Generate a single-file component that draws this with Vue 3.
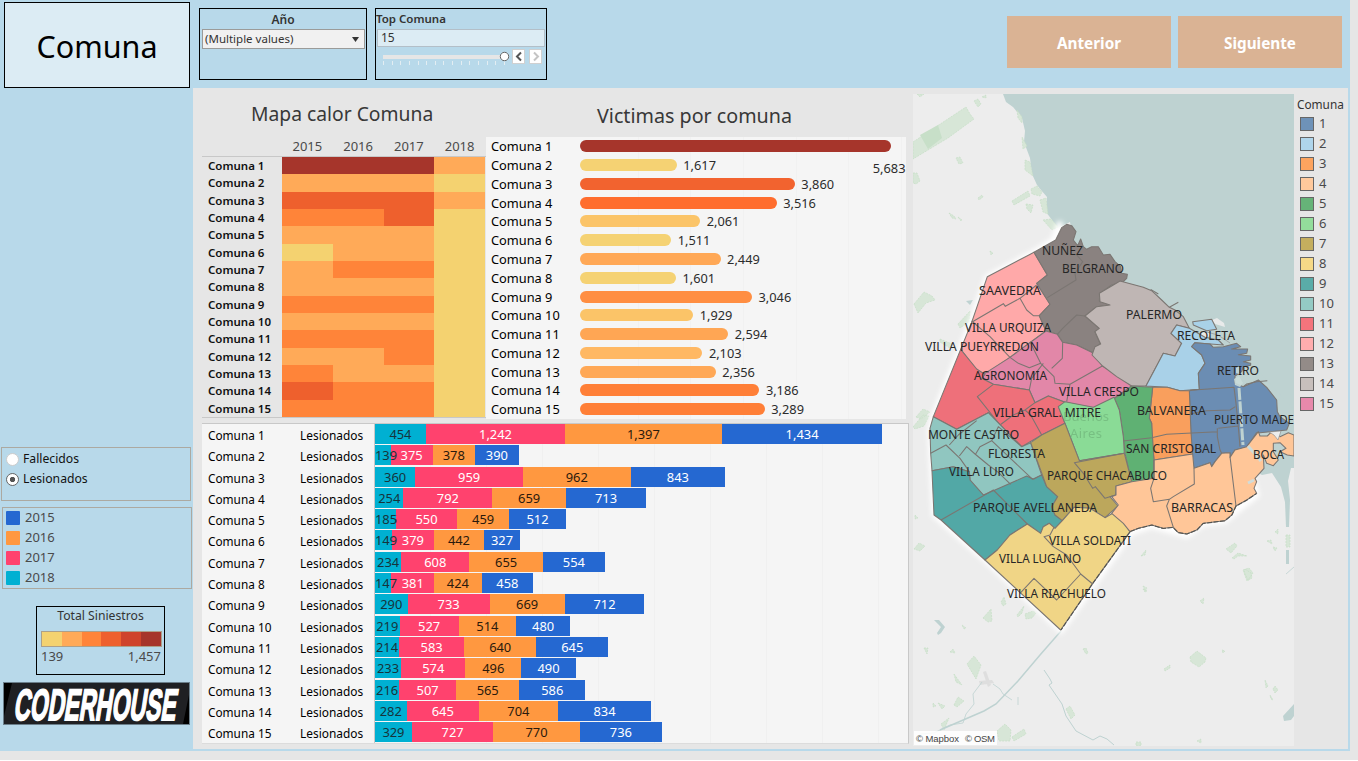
<script setup>
const heat = ['AAAC', 'CCCL', 'BBBC', 'OOBL', 'CCCL', 'LCCL', 'COOL', 'CCCL', 'OOOL', 'CCCL', 'OOOL', 'CCOL', 'OCCL', 'BOOL', 'OOOL']
const heatColors = { A: '#a6352b', B: '#ee602d', O: '#ff8439', C: '#ffaa58', L: '#f4d270' }
const scaleColors = ['#f4d270', '#ffaa58', '#ff8439', '#ee602d', '#cf432b', '#a6352b']

const victims = [
  [5683, '#a6352b'], [1617, '#f5d273'], [3860, '#f2632f'], [3516, '#ff6d2e'], [2061, '#fbc468'],
  [1511, '#f5d273'], [2449, '#ffa856'], [1601, '#f5d273'], [3046, '#ff8e42'], [1929, '#fbc468'],
  [2594, '#ffa654'], [2103, '#ffb863'], [2356, '#ffa856'], [3186, '#ff7f37'], [3289, '#ff7f37'],
]
const fmt = (n) => n.toLocaleString('en-US')
const barWidth = (v) => 11.7 + v * 0.05263 + 'px'

const injured = [
  [454, 1242, 1397, 1434], [139, 375, 378, 390], [360, 959, 962, 843], [254, 792, 659, 713],
  [185, 550, 459, 512], [149, 379, 442, 327], [234, 608, 655, 554], [147, 381, 424, 458],
  [290, 733, 669, 712], [219, 527, 514, 480], [214, 583, 640, 645], [233, 574, 496, 490],
  [216, 507, 565, 586], [282, 645, 704, 834], [329, 727, 770, 736],
]
const years = [['2015', '#2568d1'], ['2016', '#ff9840'], ['2017', '#ff426e'], ['2018', '#00b0d2']]

const legend = ['#6e92b8', '#afd5eb', '#fda45f', '#ffc99c', '#66b378', '#93dd9b', '#c4ae5e', '#f6d987', '#5aaca8', '#94cac4', '#f4747c', '#ffadae', '#938b88', '#c7bfbc', '#e789ab']

// Each tile carries its own origin; shapes inside use thirds of a pixel.
const tiles = [
  {
    t: 'translate(910 215) scale(.33333)',
    areas: [
      ['#ffa9a9', 'M232,185L372,112 412,180 380,205 420,268 388,302 408,348 300,427 225,478 200,465 152,403 185,322Z'],
      ['#8a8280', 'M372,112L437,75 455,38 470,28 485,32 498,50 490,75 503,92 512,72 520,95 530,103 545,95 565,95 580,120 600,118 615,140 632,155 635,175 652,178 650,190 640,200 605,210 570,235 568,258 600,270 560,275 525,303 568,340 555,350 570,385 548,413 500,390 458,382 442,358 408,348 388,302 420,268 380,205 412,180Z'],
      ['#e287a8', 'M220,478L300,427 408,348 442,358 458,382 500,390 548,413 577,453 620,478 665,513 612,550 550,578 465,562 415,543 375,563 358,525 250,508 215,490Z'],
      ['#ee707a', 'M152,403L200,462 225,478 215,490 250,508 358,525 375,563 415,543 465,562 445,575 465,625 395,660 335,695 235,593 140,643 70,605Z'],
    ],
    lines: 'M185,322L280,266 286,274 330,250 380,210M330,250L350,285 370,302 388,302M185,318L240,365 300,427M412,248L498,195 495,175 518,140 500,120M442,358L458,340 500,300 525,303M300,427L325,445 358,458 392,445 360,380M392,445L432,485 435,505 480,508 577,453M425,460L457,430 458,382M400,445L365,490 358,525M480,508L470,560M250,508L202,545 270,630 310,600 345,585 375,563M345,585L362,600 395,660',
  },
  {
    t: 'translate(1080 250) scale(.33333)',
    areas: [
      ['#bfb6b4', 'M95,108L120,93 190,112 215,122 245,150 268,172 285,180 310,200 328,235 290,225 273,250 305,280 285,318 250,310 198,408 155,408 110,380 68,348 36,315 45,290 62,282 45,245 58,235 15,198 50,170 90,165 60,155 58,130Z'],
      ['#a9d1e8', 'M290,225L328,235 375,262 415,270 430,285 345,278 335,290 365,315 375,340 355,370 358,418 300,422 262,412 198,408 250,310 285,318 305,280 273,250Z'],
      ['#a9d1e8', 'M338,215L395,208 410,238 380,242 340,225Z'],
      ['#6b8db3', 'M345,278L390,282 400,292 430,290 470,280 482,290 455,297 503,297 500,310 475,314 512,318 512,330 490,335 512,340 512,346 490,350 485,365 465,378 465,400 490,410 535,390 560,412 590,450 592,485 600,500 628,520 620,540 570,545 540,548 530,548 500,592 465,600 450,622 450,608 425,610 405,635 395,650 390,638 342,655 335,615 328,422 358,418 355,370 375,340 365,315 335,290Z'],
      ['#f99f5d', 'M218,412L262,412 300,422 328,422 333,548 338,612 222,630 215,560 215,520 208,505Z'],
      ['#5fb173', 'M155,408L218,412 208,505 215,520 222,630 222,685 155,698 135,610 130,560 118,480 103,445 120,435Z'],
    ],
    lines: 'M330,421L462,412 468,460 475,530 480,590M330,492L380,482 450,480 466,470M215,563L260,553 412,545M130,573L215,563M415,535L475,528M412,535L412,560 420,600 425,610M268,172L295,157M490,410L500,402 530,395 562,392M212,118L235,132',
  },
  {
    t: 'translate(910 400) scale(.33333)',
    areas: [
      ['#8adb96', 'M445,20L465,5 550,22 612,-8 628,30 640,110 643,160 508,182 465,70Z'],
      ['#90c6c0', 'M70,50L140,88 235,38 335,140 362,128 395,225 368,238 350,230 255,280 220,285 180,240 178,215 130,200 66,212 62,160 60,85Z'],
      ['#52a8a6', 'M66,212L130,200 178,215 180,240 220,285 255,270 350,228 370,238 395,225 410,260 443,290 425,320 435,345 457,362 435,385 418,370 400,380 392,400 352,372 300,405 262,450 225,480 93,360 72,345Z'],
      ['#bca75c', 'M362,128L395,105 465,70 508,182 643,160 665,245 618,258 617,285 600,290 624,318 585,353 540,325 492,322 457,362 435,345 425,320 443,290 410,260Z'],
      ['#f0d586', 'M457,362L492,322 540,325 585,353 608,340 640,365 660,395 550,548 452,690 225,480 262,450 300,405 352,372 392,400 400,380 418,370 435,385Z'],
    ],
    lines: 'M62,160L108,135 150,175 178,215M148,168L170,140 195,162 235,195 265,217 302,253M118,135L145,105 200,62M197,162L210,140 245,122 368,238M245,122L265,80 335,140M93,360L250,270 352,372M643,160L493,188 520,220 548,265 556,260 585,295 617,285M432,382L420,405 402,410 430,440 470,465 512,522 548,552M330,580L372,535 440,600 512,522',
  },
  {
    t: 'translate(1080 400) scale(.33333)',
    areas: [
      ['#ffc698', 'M108,258L155,245 222,235 222,180 338,162 342,205 390,188 395,200 405,185 425,160 450,158 450,172 465,150 500,140 535,95 540,108 562,108 575,95 600,110 625,98 642,105 642,168 622,165 600,155 618,145 600,128 580,130 580,155 595,180 580,197 560,190 550,165 552,205 525,235 530,245 522,265 530,280 500,300 468,318 455,345 435,362 370,370 350,390 320,402 295,398 280,382 250,385 215,375 175,385 150,395 130,370 95,340 115,315 95,290 108,285Z'],
    ],
    lines: 'M222,180L222,235 212,265 220,305 268,298 280,290 343,252 342,205M268,298L260,318 280,382M450,170L468,318',
  },
]

const places = [
  ['NUÑEZ', 1042, 41, 255], ['BELGRANO', 1062, 62, 273], ['SAAVEDRA', 979, 62, 295], ['VILLA URQUIZA', 965, 86, 332],
  ['VILLA PUEYRREDON', 925, 114, 351], ['PALERMO', 1126, 56, 319], ['RECOLETA', 1177, 58, 340], ['RETIRO', 1217, 42, 375],
  ['AGRONOMIA', 974, 73, 380], ['VILLA CRESPO', 1059, 80, 396], ['VILLA GRAL. MITRE', 993, 108, 417], ['BALVANERA', 1137, 69, 415],
  ['PUERTO MADE', 1214, 80, 424], ['MONTE CASTRO', 928, 91, 439], ['FLORESTA', 988, 57, 458], ['SAN CRISTOBAL', 1126, 90, 453],
  ['BOCA', 1253, 31, 459], ['VILLA LURO', 949, 65, 476], ['PARQUE CHACABUCO', 1047, 120, 480], ['PARQUE AVELLANEDA', 973, 124, 512],
  ['BARRACAS', 1171, 62, 512], ['VILLA SOLDATI', 1049, 82, 545], ['VILLA LUGANO', 999, 82, 563], ['VILLA RIACHUELO', 1007, 99, 598],
]
</script>

<template>
  <div class="page">
    <div class="board">
      <aside class="side">
        <h1 class="title">Comuna</h1>
        <div class="radios">
          <label><i class="radio"></i>Fallecidos</label>
          <label><i class="radio on"></i>Lesionados</label>
        </div>
        <div class="years">
          <div v-for="y in years" :key="y[0]"><i :style="{ background: y[1] }"></i><span>{{ y[0] }}</span></div>
        </div>
        <div class="scale">
          <div class="scale-title">Total Siniestros</div>
          <div class="ramp"><i v-for="c in scaleColors" :key="c" :style="{ background: c }"></i></div>
          <div class="ends"><span>139</span><span>1,457</span></div>
        </div>
        <svg class="logo" viewBox="0 0 187 43">
          <rect width="187" height="43" fill="#1f2023" />
          <path d="M1,1H9L1,34ZM187,8V42H180Z" fill="#000" />
          <rect x=".5" y=".5" width="186" height="42" fill="none" stroke="#6b7f8b" />
          <text transform="translate(10 37.500) skewX(-9)" x="0" y="0" textLength="162" lengthAdjust="spacingAndGlyphs">CODERHOUSE</text>
        </svg>
      </aside>

      <div class="content">
        <header class="top">
          <section class="filter">
            <div class="filter-name center">Año</div>
            <div class="select"><span>(Multiple values)</span><svg width="7" height="5"><path d="M0,0H7L3.5,5Z" fill="#333" /></svg></div>
          </section>
          <section class="filter top-n">
            <div class="filter-name">Top Comuna</div>
            <div class="field">15</div>
            <svg class="slider" viewBox="0 0 170 20" width="170" height="20">
              <rect x="7" y="7" width="121" height="4" fill="#e6e6e6" />
              <path v-for="i in 15" :key="i" :d="`M${Math.round((i - 1) * 8.64) + 7.5},13v4`" stroke="#e3edf2" />
              <circle cx="128.500" cy="8.500" r="4.200" fill="#fff" stroke="#666" />
              <rect x="136.500" y="1.500" width="12" height="14" fill="#fff" stroke="#d0d0d0" />
              <rect x="153.500" y="1.500" width="12" height="14" fill="#fff" stroke="#d0d0d0" />
              <path d="M145,4.500L141,8.500 145,12.500" fill="none" stroke="#555" stroke-width="2" />
              <path d="M158,4.500L162,8.500 158,12.500" fill="none" stroke="#c4c4c4" stroke-width="2" />
            </svg>
          </section>
          <nav><button>Anterior</button><button>Siguiente</button></nav>
        </header>

        <main class="panel">
          <div class="charts">
            <div class="upper">
              <section class="heat">
                <h2>Mapa calor Comuna</h2>
                <div class="heat-head"><b></b><span v-for="y in years" :key="y[0]">{{ y[0] }}</span></div>
                <div class="heat-body">
                  <div v-for="(r, i) in heat" :key="i" class="heat-row">
                    <b>Comuna {{ i + 1 }}</b>
                    <i v-for="(c, j) in r" :key="j" :style="{ background: heatColors[c] }"></i>
                  </div>
                </div>
              </section>
              <section class="victims">
                <h2>Victimas por comuna</h2>
                <div class="victims-body">
                  <div v-for="(v, i) in victims" :key="i" class="v-row">
                    <span class="v-name">Comuna {{ i + 1 }}</span>
                    <i :style="{ width: barWidth(v[0]), background: v[1] }"></i>
                    <span :class="['v-num', { below: i === 0 }]">{{ fmt(v[0]) }}</span>
                  </div>
                </div>
              </section>
            </div>
            <section class="stack">
              <div v-for="(r, i) in injured" :key="i" class="s-row">
                <span class="s-name">Comuna {{ i + 1 }}</span>
                <span class="s-kind">Lesionados</span>
                <div class="s-bars">
                  <div v-for="(n, j) in r" :key="j" :class="['seg', 'seg' + j]" :style="{ width: n * 0.1121 + 'px' }"><span>{{ fmt(n) }}</span></div>
                </div>
              </div>
            </section>
          </div>

          <svg class="map" viewBox="913 94 381 652" width="381" height="652">
            <defs>
              <filter id="glow" x="-10%" y="-10%" width="120%" height="120%"><feGaussianBlur stdDeviation="2.500" /></filter>
            </defs>
            <rect x="913" y="94" width="381" height="652" fill="#ededed" />
            <path fill="#bed2d1" d="M1003,94L1006,102 1013,107 1022,118 1025,131 1024,142 1030,158 1032,174 1037,185 1041,190 1047,197 1046,212 1052,220 1058,228 1070,222 1090,330 1200,440 1262,475 1272,473 1281,487 1285,502 1286,527 1289,527 1290,500 1288,481 1291,468 1294,468V94Z" />
            <path fill="#d7e6d7" stroke="#c5dec6" stroke-width=".7" stroke-dasharray="2 1" d="M913,142L966,107 970,114 974,119 948,138 913,159ZM974,101l4,-2 3,5 -3,3ZM982,97l4,-2v3ZM917,94h7l-4,3ZM956,158l4,-1 3,6 -4,1ZM913,173l4,0 3,8 -4,3 -3,-1ZM978,198l4,-3 1,2 -4,3ZM949,213l5,3 2,3 -4,-1ZM958,217l4,3 -1,1ZM1012,201L1028,191 1030,196 1014,205ZM1026,204l7,1 -2,8 -4,-4ZM1025,160l5,2 3,14 -8,-6ZM1031,189l6,-3 5,6 -2,4 -8,-2ZM1040,200l6,-2 2,16 -5,-2ZM1043,220l8,-1 7,8 -6,3ZM1017,110l5,7v6l-4,-5ZM1022,137l5,9 -4,3ZM990,251l3,2 -2,2ZM914,304L924,292 932,296 935,300 926,303 918,313ZM958,324l12,-13 -1,11 -9,6ZM940,339l12,5 -2,4 -10,-6ZM916,417l7,-8 7,3 -9,7ZM913,427l10,-12 6,1 -5,10 -9,3ZM915,515l3,3 -3,1ZM914,549l5,-6 6,3 -5,5ZM1001,602l3,-5 2,7 -3,2ZM983,618l8,-9 1,12 -4,1ZM1017,615l7,-9 -2,7 -4,4ZM1025,614l8,-3 3,2 -4,5 -6,1ZM962,625l4,3 -2,1ZM967,664L974,656 981,665 976,679ZM924,648h4l-1,6ZM950,652l3,-3 2,4ZM954,674l8,11 -6,-3ZM933,703l3,3 -3,1ZM938,703l7,3 -3,3ZM954,705l4,-8 6,4 -7,6ZM941,724l8,-6 -5,12ZM997,731l8,-7 6,6 -1,11h-11ZM1012,737l12,-8 2,5 -12,7ZM1066,709l4,-3 5,9 -4,4ZM1083,649l3,-1 2,5 -2,1ZM1164,669l6,-4v3l-5,3ZM1190,657l7,-6 9,7 -1,4 -6,5 -8,-5ZM1222,650l3,1 -2,2ZM1265,680l3,6 -2,2ZM1273,689l2,-3 3,4 -3,3ZM1270,695l3,5 -2,-1ZM1136,742h5v4h-5ZM1197,741l4,-2v4ZM1143,586l4,2 -2,3ZM1200,601l4,-3 -1,6ZM1245,569l6,4 1,5 -5,3 -3,-8ZM1226,549l9,-6 2,3 -6,7ZM1232,558l6,-5 9,3 -9,0 -4,3ZM1243,570l6,-2 4,5 -5,7ZM1267,541l4,-1 1,4ZM1275,532l3,-3v5ZM1273,547l4,1 -2,3ZM1286,535h4v12h-4ZM1141,556l5,-6 -1,5ZM1143,589l4,2 -2,1Z" />
            <path fill="#c7dfc8" d="M920,135L938,125 942,138 928,149Z" />
            <path fill="#d4d4d4" d="M983,672l3,-1 5,14 -3,2ZM979,681l13,-1 2,3 -14,2Z" opacity=".6" />
            <path fill="#bed2d1" d="M966,301l7,-1 -3,5ZM934,620h5l6,7 -4,6 -3,2 -1,-2 4,-6ZM1294,704L1283,716 1284,721 1291,720 1294,716ZM1286,550h3v14h-3Z" />
            <g fill="none" stroke="#bed2d1">
              <path d="M1061,631L1040,655 1018,681 996,704 984,711 940,730" stroke-width="1.500" />
              <path d="M1044,670L1050,679 1052,683 1049,685 1062,704 1066,716 1076,731 1093,740L1100,736 1107,739 1114,745" stroke-width="1" />
              <path d="M917,740L920,734 934,733 950,725 963,723 966,714 974,704 973,694 982,682M993,684l7,5 3,5 9,6M1018,697v8M1286,574l8,-7" stroke-width=".8" />
            </g>
            <g filter="url(#glow)">
              <path d="M1060,222L1053,240 1034,252 987,277 971,322 933,417 930,430 934,515 985,560 1061,631 1131,533 1152,526 1187,536 1203,524 1225,521 1257,495 1250,470 1200,440 1100,400 1070,300Z" fill="#fff" stroke="#fff" stroke-width="5" />
            </g>
            <path d="M1075,228L1130,278 1187,312 1235,340 1262,375 1294,410V445L1262,445 1200,440 1150,390 1075,290Z" fill="#bed2d1" />
            <path fill="#ececec" d="M1212,320l5,-2 7,5 1,4 -10,-3ZM1203,330l8,4 -5,5 -5,-4Z" opacity=".9" />
            <path d="M1203,331L1218,335 1230,343" fill="none" stroke="#999" stroke-width=".8" />
            <g v-for="(g, i) in tiles" :key="i" :transform="g.t" stroke="#7b7672" stroke-width="3.200" stroke-linejoin="round">
              <path v-for="(a, j) in g.areas" :key="j" :fill="a[0]" :d="a[1]" />
              <path :d="g.lines" fill="none" />
            </g>
            <path d="M1239,388L1243,445" stroke="#bed2d1" stroke-width="3" stroke-dasharray="12 1.500" />
            <path d="M1234,379l5,-3 4,7 -3,4 -5,-2ZM1236,368l3,-2v8l-3,-1Z" fill="#c9dcd9" opacity=".9" />
            <path d="M1248,483l6,-3M1248,446l13,15" stroke="#d0dcda" stroke-width="3" />
            <path d="M1269,432l12,-1 -3,9 -4,-5Z" fill="#ededed" stroke="#888" stroke-width=".6" />
            <path d="M1130,531.500L1138,528.500 1152,525 1163,528.500 1173,527.500 1178,532.500 1187,534 1197,530 1203,523.500 1225,520.700 1232,515 1236,506 1247,500 1256.500,493.500M1130,532L1093,583 1061,630" fill="none" stroke="#535350" stroke-width="1.100" stroke-dasharray="5 1.500" />
            <g class="city"><text x="1063" y="421" textLength="46">Buenos</text><text x="1070" y="438" textLength="32">Aires</text></g>
            <g class="places">
              <text v-for="p in places" :key="p[0]" :x="p[1]" :y="p[3]" :textLength="p[2]" lengthAdjust="spacingAndGlyphs">{{ p[0] }}</text>
            </g>
            <rect x="914" y="731" width="83" height="14" fill="#fff" opacity=".85" />
            <g class="credit"><text x="916" y="742" textLength="43">© Mapbox</text><text x="965" y="742" textLength="30">© OSM</text></g>
          </svg>

          <div class="legend">
            <div class="legend-title">Comuna</div>
            <div v-for="(c, i) in legend" :key="i" class="legend-row"><i :style="{ background: c }"></i><span>{{ i + 1 }}</span></div>
          </div>
        </main>
      </div>
    </div>
  </div>
</template>

<style>
body { background: #fff; }
</style>
<style scoped>
* { box-sizing: border-box; margin: 0; }
.page { width: 1358px; height: 760px; background: #e6e6e6; font: 13px/16px "Noto Sans", "Open Sans", sans-serif; color: #333; overflow: hidden; }
.board { width: 1350px; height: 751px; background: #b8d9ea; display: flex; }
i { display: block; flex: none; }
.side { width: 193px; height: 751px; padding: 2px 0 0 1px; display: flex; flex-direction: column; flex: none; }
.title { width: 186px; height: 86px; margin-left: 3px; border: 1px solid #000; background: #dcecf4; color: #000; font-size: 30.500px; font-weight: 400; display: flex; align-items: center; justify-content: center; padding-top: 2px; }
.radios { width: 190px; height: 54px; margin-top: 359px; border: 1px solid #aca9a1; padding: 1px 0 0 4px; font-size: 12.200px; color: #111; }
.radios label { display: flex; align-items: center; height: 20px; gap: 4px; }
.radio { width: 13px; height: 13px; border-radius: 50%; background: #fff; border: 1px solid #ccc; }
.radio.on { border-color: #666; background: radial-gradient(circle, #555 0 2.300px, #fff 3px); }
.years { width: 190px; height: 82px; margin: 6px 0 0 1px; border: 1px solid #aca9a1; padding-left: 3px; color: #4a4a4a; }
.years div { display: flex; align-items: center; gap: 5px; height: 20px; }
.years i { width: 14px; height: 14px; border-radius: 1px; }
.years span { padding-bottom: 2px; }
.scale { width: 129px; height: 69px; margin: 17px 0 0 35px; border: 1px solid #000; }
.scale-title { text-align: center; font-size: 12.200px; height: 24px; line-height: 17px; }
.ramp { display: flex; width: 121px; height: 16px; margin-left: 4px; border: 1px solid #aca08a; }
.ramp i { flex: 1; }
.ends { display: flex; justify-content: space-between; padding: 1px 3px 0 4px; color: #4a4a4a; }
.logo { width: 187px; height: 43px; margin: 7px 0 0 2px; }
.logo text { font: bold 44px "Liberation Sans", sans-serif; fill: #fff; stroke: #fff; stroke-width: 1.800px; }
.content { width: 1157px; display: flex; flex-direction: column; }
.top { height: 88px; display: flex; padding: 8px 0 0 6px; gap: 8px; }
.filter { width: 168px; height: 72px; border: 1px solid #000; padding: 1px 2px; }
.filter-name { font-weight: 600; font-size: 12px; height: 19px; line-height: 19px; }
.top-n .filter-name { font-size: 11.500px; line-height: 18px; }
.center { text-align: center; }
.select { height: 20px; width: 163px; border: 1px solid #9b9b99; background: #f1f1f1; display: flex; justify-content: space-between; align-items: center; padding: 0 5px 0 2px; font-size: 11.500px; }
.top-n { width: 172px; padding: 1px 0; }
.field { height: 18px; width: 168px; margin-left: 1px; border: 1px solid #b3bfc8; background: #dcecf4; font-size: 12px; line-height: 16px; padding-left: 3px; }
.slider { display: block; margin-top: 1px; }
nav { margin: 8px 8px 0 auto; display: flex; gap: 7px; }
button { width: 164px; height: 52px; border: 0; background: #dab394; color: #fff; font: bold 15.300px "Noto Sans", sans-serif; padding: 2px 0 0; }
.panel { height: 661px; width: 1155px; background: #e6e6e6; display: flex; }
.charts { width: 720px; padding-left: 9px; flex: none; }
.upper { display: flex; height: 335px; }
h2 { font-size: 19.700px; font-weight: 400; line-height: 26px; color: #383838; white-space: nowrap; }
.heat { width: 284px; }
.heat h2 { margin: 13px 0 0 49px; font-size: 19.300px; }
.heat-head { display: flex; height: 29px; align-items: flex-end; line-height: 19px; color: #4a4a4a; }
.heat-head b { width: 80px; }
.heat-head span { width: 50.750px; text-align: center; }
.heat-body { height: 262px; border-top: 1px solid #c8c8c8; border-bottom: 1px solid #c8c8c8; }
.heat-row { display: flex; height: 17.333px; }
.heat-row b { width: 80px; padding-left: 6px; font-size: 11.500px; font-weight: 600; color: #111; line-height: 18px; }
.heat-row i { width: 50.750px; }
.victims { width: 420px; }
.victims h2 { margin: 15px 0 8px 111px; }
.victims-body { height: 282px; background: repeating-linear-gradient(90deg, transparent 0 51.700px, #f1f1f1 51.700px 52.700px) 100px 0 / 320px 100% no-repeat, #f5f5f5; }
.v-row { height: 18.770px; display: flex; align-items: center; }
.v-name { width: 94px; padding-left: 5px; font-size: 12.800px; color: #000; }
.v-row i { height: 12px; border-radius: 6px; }
.v-num { margin-left: 6.500px; color: #2c2c2c; font-size: 12.800px; }
.v-num.below { margin-left: -18px; transform: translateY(22px); }
.stack { width: 707px; height: 321px; border-top: 1px solid #c8c8c8; border-right: 1px solid #c8c8c8; border-bottom: 1px solid #dcdcdc; background: #f5f5f5; }
.s-row { height: 21.300px; display: flex; color: #000; font-size: 12px; line-height: 22px; }
.s-name { width: 98px; padding-left: 6px; font-size: 11.800px; }
.s-kind { width: 75px; font-size: 11.900px; border-right: 1px solid #c8c8c8; }
.s-bars { flex: 1; display: flex; background: repeating-linear-gradient(90deg, transparent 0 55px, #f0f0f0 55px 56px); }
.seg { height: 20px; display: flex; justify-content: safe center; font-size: 12.900px; flex: none; }
.seg span { position: relative; z-index: 1; line-height: 20px; }
.seg0 { background: #00b0d2; color: #16343c; }
.seg1 { background: #ff426e; color: #fff; }
.seg2 { background: #ff9840; color: #2b1a0c; }
.seg3 { background: #2568d1; color: #fff; }
.map { display: block; margin-top: 6px; flex: none; }
.places text { font-size: 12px; fill: #262626; }
.city text { font-size: 13px; fill: #6cae76; opacity: .6; }
.credit text { font: 9.500px "Liberation Sans", sans-serif; fill: #444; }
.legend { padding: 8px 0 0 3px; }
.legend-title { font-size: 11.800px; height: 18px; }
.legend-row { height: 20px; display: flex; align-items: center; gap: 5px; padding-left: 3px; color: #4a4a4a; }
.legend-row i { width: 14px; height: 14px; border: 1px solid #666; }
.legend-row span { padding-bottom: 2px; }
</style>
